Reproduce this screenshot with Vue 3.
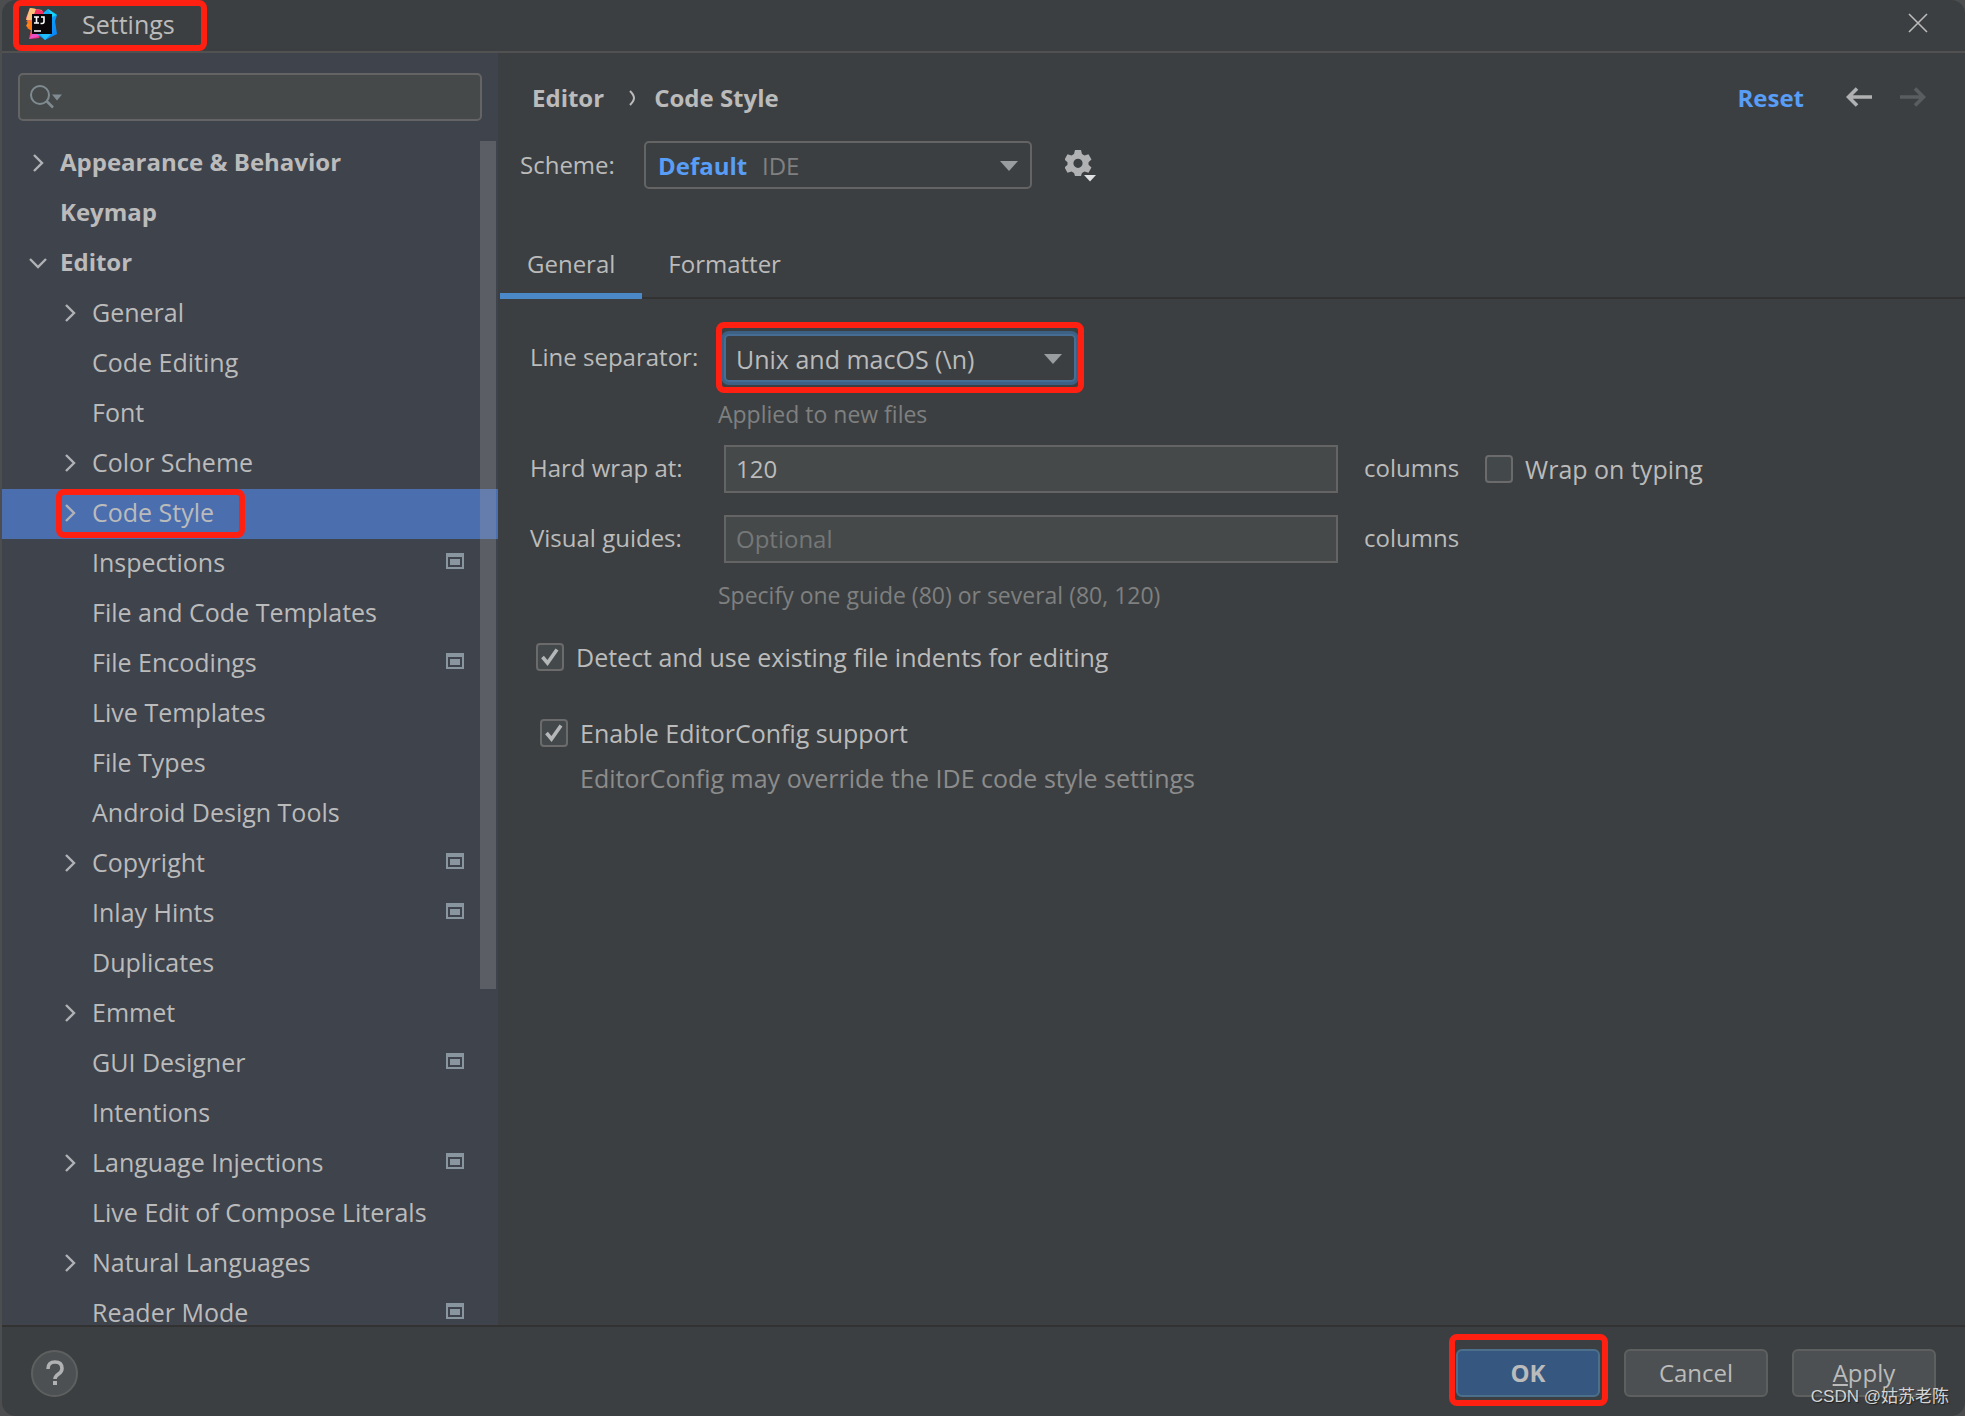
<script setup>
import { ref } from 'vue'

const tree = [
  { label: 'Appearance & Behavior', level: 0, arrow: 'right' },
  { label: 'Keymap', level: 0 },
  { label: 'Editor', level: 0, arrow: 'down' },
  { label: 'General', level: 1, arrow: 'right' },
  { label: 'Code Editing', level: 1 },
  { label: 'Font', level: 1 },
  { label: 'Color Scheme', level: 1, arrow: 'right' },
  { label: 'Code Style', level: 1, arrow: 'right', selected: true },
  { label: 'Inspections', level: 1, project: true },
  { label: 'File and Code Templates', level: 1 },
  { label: 'File Encodings', level: 1, project: true },
  { label: 'Live Templates', level: 1 },
  { label: 'File Types', level: 1 },
  { label: 'Android Design Tools', level: 1 },
  { label: 'Copyright', level: 1, arrow: 'right', project: true },
  { label: 'Inlay Hints', level: 1, project: true },
  { label: 'Duplicates', level: 1 },
  { label: 'Emmet', level: 1, arrow: 'right' },
  { label: 'GUI Designer', level: 1, project: true },
  { label: 'Intentions', level: 1 },
  { label: 'Language Injections', level: 1, arrow: 'right', project: true },
  { label: 'Live Edit of Compose Literals', level: 1 },
  { label: 'Natural Languages', level: 1, arrow: 'right' },
  { label: 'Reader Mode', level: 1, project: true },
]

const query = ref('')
const hardWrap = ref('120')
const guides = ref('')
const wrapOnTyping = ref(false)
const detectIndents = ref(true)
const editorConfig = ref(true)
</script>

<template>
  <div class="desktop">
    <div class="window">
      <header class="titlebar">
        <div class="title">
          <svg class="logo" width="32" height="32" viewBox="0 0 32 32" aria-hidden="true">
            <defs>
              <linearGradient id="warm" x1="0" y1="0" x2="0" y2="1">
                <stop offset="0" stop-color="#fdb060" />
                <stop offset="0.3" stop-color="#f2557a" />
                <stop offset="0.55" stop-color="#ff8a1c" />
                <stop offset="1" stop-color="#f0218f" />
              </linearGradient>
              <linearGradient id="cool" x1="0" y1="0" x2="1" y2="1">
                <stop offset="0" stop-color="#12c2f5" />
                <stop offset="1" stop-color="#087cfa" />
              </linearGradient>
            </defs>
            <path d="M4 0L16 2 18 16 13 30 3 31 5 22 0 18 2 14 0 10z" fill="url(#warm)" />
            <path d="M4 0L10 1 6 12 0 12z" fill="#fcc17a" />
            <path d="M10 1L17 3 17 7 8 7z" fill="#fc2f62" />
            <path d="M0 13l7 1-1 9-5-3 3-3z" fill="#ff7a12" />
            <path d="M3 31l4-7 9 1-5 4z" fill="#ec4fc4" />
            <path d="M17 5L22 1 31 7 29 13 31 26 19 32 11 26 20 20z" fill="url(#cool)" />
            <path d="M22 1l9 6-5 2z" fill="#18d1f8" />
            <path d="M19 32l7-7-12 1z" fill="#21bdf8" />
            <rect x="6" y="6" width="20" height="20" fill="#0a0508" />
            <path d="M8 9h5M8 15h5M10.500 9v6M15 9h3v4.500q0 2-2 2h-1.500" fill="none" stroke="#fff" stroke-width="1.600" />
            <path d="M8 23h7" stroke="#fff" stroke-width="1.600" />
          </svg>
          <h1>Settings</h1>
          <span class="mark mark-title"></span>
        </div>
        <button class="icon-btn" aria-label="Close">
          <svg width="22" height="22" viewBox="0 0 22 22">
            <path d="M2 2l18 18M20 2L2 20" stroke="#bbbbbb" stroke-width="1.600" />
          </svg>
        </button>
      </header>

      <div class="body">
        <aside class="sidebar">
          <label class="search">
            <svg width="34" height="28" viewBox="0 0 34 28" aria-hidden="true">
              <circle cx="11" cy="12" r="9" fill="none" stroke="#7f8b91" stroke-width="2" />
              <path d="M17.500 18l6.500 6.500" stroke="#7f8b91" stroke-width="2.600" />
              <path d="M23 11.500h10l-5 6z" fill="#7f8b91" />
            </svg>
            <input v-model="query" type="text" aria-label="Search settings" />
          </label>

          <div class="tree-wrap">
            <ul class="tree" role="tree">
              <li
                v-for="item in tree"
                :key="item.label"
                role="treeitem"
                :aria-selected="!!item.selected"
                :class="['row', 'level-' + item.level, { selected: item.selected }]"
              >
                <span class="arrow">
                  <svg v-if="item.arrow" width="18" height="18" viewBox="0 0 18 18">
                    <path
                      :d="item.arrow === 'right' ? 'M5 1L13 9 5 17' : 'M1 5L9 13 17 5'"
                      fill="none"
                      stroke="#b0b2b5"
                      stroke-width="2.400"
                    />
                  </svg>
                </span>
                <span class="label">{{ item.label }}</span>
                <svg v-if="item.project" class="project" width="18" height="16" viewBox="0 0 18 16">
                  <path fill-rule="evenodd" d="M0 0h18v16H0zM2 4v10h14V4z" fill="#8a969f" />
                  <rect x="4" y="6" width="10" height="6" fill="#8a969f" />
                </svg>
                <span v-if="item.selected" class="mark mark-row"></span>
              </li>
            </ul>
            <span class="thumb"></span>
          </div>
        </aside>

        <main class="content">
          <div class="crumbs">
            <strong>Editor</strong>
            <svg width="8" height="16" viewBox="0 0 8 16" aria-hidden="true">
              <path d="M1 1q4 4 4 7t-4 7" fill="none" stroke="#bbbbbb" stroke-width="2" />
            </svg>
            <strong>Code Style</strong>
            <a class="reset" href="#">Reset</a>
            <button class="icon-btn nav" aria-label="Back">
              <svg width="26" height="20" viewBox="0 0 26 20">
                <path d="M11 1.500L2.500 10 11 18.500M2 10h24" fill="none" stroke="#afb1b3" stroke-width="3.600" />
              </svg>
            </button>
            <button class="icon-btn nav" aria-label="Forward" disabled>
              <svg width="26" height="20" viewBox="0 0 26 20">
                <path d="M15 1.500L23.500 10 15 18.500M24 10H0" fill="none" stroke="#5a5d5f" stroke-width="3.600" />
              </svg>
            </button>
          </div>

          <div class="scheme">
            <label for="scheme">Scheme:</label>
            <span class="combo scheme-combo">
              <select id="scheme"><option>Default</option></select>
              <span class="scope">IDE</span>
              <svg class="caret" width="18" height="10" viewBox="0 0 18 10"><path d="M0 0h18L9 10z" fill="#9a9da0" /></svg>
            </span>
            <button class="icon-btn" aria-label="Scheme actions">
              <svg width="32" height="34" viewBox="0 0 32 34">
                <g fill="#afb1b3">
                  <path
                    fill-rule="evenodd"
                    d="M10 2h6l1 4 2.500 1.500 4-1.200 3 5.200-3 2.700v2.600l3 2.700-3 5.200-4-1.200L17 25l-1 3h-6l-1-3-2.500-1.500-4 1.200-3-5.200 3-2.700v-2.600l-3-2.700 3-5.200 4 1.200L9 6zM13 10.700a4.600 4.600 0 1 0 0 9.200 4.600 4.600 0 0 0 0-9.200z"
                  />
                </g>
                <path d="M16.500 26h12l-5 7z" fill="#3c3f41" />
                <path d="M19 27h12l-6 6.500z" fill="#dfe1e3" />
              </svg>
            </button>
          </div>

          <div class="tabs" role="tablist">
            <button role="tab" class="tab active" aria-selected="true">General</button>
            <button role="tab" class="tab" aria-selected="false">Formatter</button>
          </div>

          <form class="form" @submit.prevent>
            <div class="field">
              <label class="name" for="separator">Line separator:</label>
              <span class="combo separator-combo">
                <select id="separator"><option>Unix and macOS (\n)</option></select>
                <svg class="caret" width="18" height="10" viewBox="0 0 18 10"><path d="M0 0h18L9 10z" fill="#9a9da0" /></svg>
                <span class="mark mark-combo"></span>
              </span>
            </div>
            <p class="hint">Applied to new files</p>
            <div class="field">
              <label class="name" for="wrap">Hard wrap at:</label>
              <input id="wrap" v-model="hardWrap" class="text" type="text" />
              <span class="unit">columns</span>
              <label class="check">
                <span class="box"><input v-model="wrapOnTyping" type="checkbox" /></span>
                Wrap on typing
              </label>
            </div>
            <div class="field second">
              <label class="name" for="guides">Visual guides:</label>
              <input id="guides" v-model="guides" class="text" type="text" placeholder="Optional" />
              <span class="unit">columns</span>
            </div>
            <p class="hint">Specify one guide (80) or several (80, 120)</p>

            <label class="check detect">
              <span class="box">
                <input v-model="detectIndents" type="checkbox" />
                <svg v-if="detectIndents" width="28" height="28" viewBox="0 0 28 28">
                  <path d="M6.500 14l5 6L21 6.500" fill="none" stroke="#b4b6b8" stroke-width="3.600" />
                </svg>
              </span>
              Detect and use existing file indents for editing
            </label>
            <label class="check config">
              <span class="box">
                <input v-model="editorConfig" type="checkbox" />
                <svg v-if="editorConfig" width="28" height="28" viewBox="0 0 28 28">
                  <path d="M6.500 14l5 6L21 6.500" fill="none" stroke="#b4b6b8" stroke-width="3.600" />
                </svg>
              </span>
              Enable EditorConfig support
            </label>
            <p class="config-hint">EditorConfig may override the IDE code style settings</p>
          </form>
        </main>
      </div>

      <footer class="footer">
        <button class="help" aria-label="Help">
          <svg width="18" height="26" viewBox="0 0 18 26">
            <path d="M2 9Q2 2 9 2t7 6.500q0 3-3.500 5.500T9 19" fill="none" stroke="#afb1b3" stroke-width="3.600" />
            <rect x="7" y="21" width="4" height="4" fill="#afb1b3" />
          </svg>
        </button>
        <div class="actions">
          <button class="btn primary">OK<span class="mark mark-ok"></span></button>
          <button class="btn">Cancel</button>
          <button class="btn"><u>A</u>pply</button>
        </div>
        <span class="watermark">CSDN @姑苏老陈</span>
      </footer>
    </div>
  </div>
</template>

<style>
body {
  margin: 0;
  background: #4b4d4e;
}
</style>

<style scoped>
.desktop {
  box-sizing: border-box;
  height: 100vh;
  padding-left: 2px;
  background: #4b4d4e;
  color: #bbbbbb;
  font: 24px/32px "Open Sans", "Noto Sans", sans-serif;
}
.window {
  display: flex;
  flex-direction: column;
  height: 100%;
  overflow: hidden;
  background: #3c3f41;
  border-radius: 14px;
}
button,
input,
select {
  box-sizing: border-box;
  font: inherit;
  color: inherit;
  outline: none;
}
.icon-btn {
  display: flex;
  padding: 0;
  border: 0;
  background: none;
}

/* Red highlight frames */
.mark {
  position: absolute;
  border: 6px solid #ff2012;
  border-radius: 8px;
  pointer-events: none;
}
.mark-title {
  inset: 0 -32px 0 -13px;
}
.mark-row {
  left: 54px;
  top: 0;
  width: 177px;
  height: 37px;
}
.mark-combo {
  inset: -12px -8px -11px -8px;
}
.mark-ok {
  inset: -17px -10px -11px -9px;
}

.titlebar {
  display: flex;
  align-items: center;
  justify-content: space-between;
  height: 51px;
  padding: 0 36px 0 24px;
  border-bottom: 2px solid #515151;
}
.titlebar .icon-btn {
  margin-bottom: 5px;
}
.title {
  position: relative;
  display: flex;
  align-items: center;
  gap: 24px;
  height: 100%;
}
.logo {
  margin-bottom: 4px;
}
h1 {
  margin: 0 0 4px;
  font: inherit;
  font-size: 25px;
}

.body {
  flex: 1;
  display: flex;
  min-height: 0;
}
.sidebar {
  display: flex;
  flex-direction: column;
  width: 496px;
  flex: none;
  background: #3f434c;
}
.search {
  display: flex;
  align-items: center;
  height: 44px;
  margin: 20px 16px 18px;
  padding-left: 9px;
  background: #45494a;
  border: 2px solid #646464;
  border-radius: 5px;
}
.search input {
  flex: 1;
  min-width: 0;
  border: 0;
  background: none;
}
.tree-wrap {
  position: relative;
  flex: 1;
  min-height: 0;
  overflow: hidden;
}
.tree {
  margin: 0;
  padding: 0;
  list-style: none;
}
.row {
  position: relative;
  display: flex;
  align-items: center;
  box-sizing: border-box;
  height: 50px;
  padding: 0 34px 2px 0;
}
.level-0 {
  padding-left: 27px;
  font-weight: 700;
}
.level-1 {
  padding-left: 59px;
  font-size: 25px;
}
.arrow {
  display: flex;
  width: 31px;
}
.label {
  flex: 1;
  padding-bottom: 2px;
  line-height: 24px;
}
.project {
  margin-bottom: 4px;
}
.selected {
  background: #4b6eaf;
}
.thumb {
  position: absolute;
  top: 2px;
  right: 2px;
  width: 16px;
  height: 848px;
  background: rgba(166, 166, 166, 0.28);
}

.content {
  flex: 1;
  min-width: 0;
}
.crumbs {
  display: flex;
  align-items: center;
  height: 48px;
  margin-top: 21px;
  padding: 0 39px 0 34px;
}
.crumbs svg {
  flex: none;
}
.crumbs > svg {
  margin: 0 17px 0 25px;
}
.crumbs strong,
.reset {
  font-weight: 700;
}
.reset {
  margin-left: auto;
  color: #589df6;
  text-decoration: none;
}
.nav {
  margin-left: 42px;
  margin-bottom: 2px;
}
.nav + .nav {
  margin-left: 28px;
}

.scheme {
  display: flex;
  align-items: center;
  margin: 19px 0 0 22px;
}
.scheme label {
  width: 124px;
}
.combo {
  position: relative;
  display: flex;
}
.combo select {
  appearance: none;
  width: 100%;
  height: 48px;
  padding: 1px 12px 0;
  border: 2px solid #646464;
  border-radius: 5px;
  background: #3c3f41;
}
.scheme-combo {
  width: 388px;
  margin-right: 33px;
}
.scheme-combo select {
  color: #589df6;
  font-weight: 700;
}
.scope {
  position: absolute;
  left: 118px;
  top: 9px;
  color: #808080;
  pointer-events: none;
}
.caret {
  position: absolute;
  right: 14px;
  top: 20px;
  pointer-events: none;
}

.tabs {
  display: flex;
  height: 67px;
  margin: 41px 0 0 2px;
  border-bottom: 2px solid #323232;
}
.tab {
  height: 69px;
  padding: 4px 27px 0;
  border: 0;
  border-bottom: 6px solid transparent;
  background: none;
}
.tab + .tab {
  padding-left: 26px;
}
.tab.active {
  border-bottom-color: #4a88c7;
}

.form {
  margin-top: 35px;
  padding-left: 32px;
}
.field {
  display: flex;
  align-items: center;
}
.name,
.unit {
  padding-bottom: 2px;
}
.name {
  width: 194px;
}
.separator-combo {
  width: 352px;
}
.separator-combo select {
  padding: 2px 10px 0;
  border-color: #466d94;
  box-shadow: 0 0 0 3px #3d6185;
  font-size: 25px;
}
.hint,
.config-hint {
  margin: 0;
  color: #7f8080;
}
.hint {
  padding: 16px 0 15px 188px;
  font-size: 23px;
}
.second {
  margin-top: 22px;
}
.text {
  width: 614px;
  height: 48px;
  padding: 0 10px 2px;
  border: 2px solid #646464;
  background: #45494a;
}
.text::placeholder {
  color: #757777;
  opacity: 1;
}
.unit {
  margin-left: 26px;
}
.check {
  display: flex;
  align-items: center;
  gap: 12px;
  height: 28px;
  font-size: 25px;
}
.field .check {
  margin-left: 26px;
}
.box {
  position: relative;
  display: flex;
}
.box input {
  appearance: none;
  width: 28px;
  height: 28px;
  margin: 0;
  border: 2px solid #6b6b6b;
  border-radius: 4px;
  background: #43494a;
}
.box svg {
  position: absolute;
  inset: 0;
  pointer-events: none;
}
.detect {
  margin: 17px 0 0 6px;
}
.config {
  margin: 48px 0 0 10px;
}
.config-hint {
  padding: 15px 0 0 50px;
  color: #8c8c8c;
  font-size: 25px;
}

.footer {
  position: relative;
  display: flex;
  align-items: center;
  justify-content: space-between;
  box-sizing: border-box;
  height: 91px;
  padding: 3px 29px 0;
  border-top: 2px solid #323232;
}
.help {
  display: flex;
  align-items: center;
  justify-content: center;
  width: 47px;
  height: 47px;
  padding: 0;
  border: 2px solid #5e6060;
  border-radius: 50%;
  background: #4c5052;
}
.actions {
  display: flex;
  gap: 24px;
}
.btn {
  position: relative;
  width: 144px;
  height: 48px;
  padding: 0;
  border: 2px solid #5e6060;
  border-radius: 6px;
  background: #4c5052;
}
.primary {
  border-color: #4c708c;
  background: #365880;
  font-weight: 700;
}
.watermark {
  position: absolute;
  right: 16px;
  bottom: 6px;
  color: #d4d4d4;
  font: 17px/26px "Liberation Sans", "Noto Sans CJK SC", sans-serif;
  text-shadow: 1px 1px 1px #222222;
  pointer-events: none;
}
</style>
